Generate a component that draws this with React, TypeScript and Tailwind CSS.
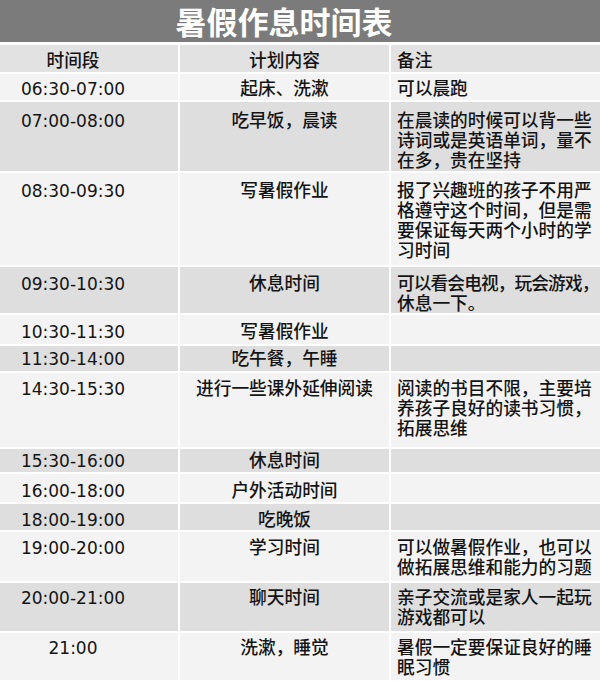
const rows = [
  { time: "06:30-07:00", plan: "起床、洗漱", notes: ["可以晨跑"], h: 26, pt: 3 },
  {
    time: "07:00-08:00",
    plan: "吃早饭，晨读",
    notes: ["在晨读的时候可以背一些", "诗词或是英语单词，量不", "在多，贵在坚持"],
    h: 69,
    pt: 7,
  },
  {
    time: "08:30-09:30",
    plan: "写暑假作业",
    notes: ["报了兴趣班的孩子不用严", "格遵守这个时间，但是需", "要保证每天两个小时的学", "习时间"],
    h: 92,
    pt: 6,
  },
  {
    time: "09:30-10:30",
    plan: "休息时间",
    notes: ["可以看会电视，玩会游戏，", "休息一下。"],
    h: 46,
    pt: 5,
  },
  { time: "10:30-11:30", plan: "写暑假作业", notes: [], h: 29, pt: 5 },
  { time: "11:30-14:00", plan: "吃午餐，午睡", notes: [], h: 25, pt: 1 },
  {
    time: "14:30-15:30",
    plan: "进行一些课外延伸阅读",
    notes: ["阅读的书目不限，主要培", "养孩子良好的读书习惯，", "拓展思维"],
    h: 74,
    pt: 4,
  },
  { time: "15:30-16:00", plan: "休息时间", notes: [], h: 23, pt: 0 },
  { time: "16:00-18:00", plan: "户外活动时间", notes: [], h: 28, pt: 5 },
  { time: "18:00-19:00", plan: "吃晚饭", notes: [], h: 26, pt: 4 },
  {
    time: "19:00-20:00",
    plan: "学习时间",
    notes: ["可以做暑假作业，也可以", "做拓展思维和能力的习题"],
    h: 49,
    pt: 4,
  },
  {
    time: "20:00-21:00",
    plan: "聊天时间",
    notes: ["亲子交流或是家人一起玩", "游戏都可以"],
    h: 48,
    pt: 3,
  },
  {
    time: "21:00",
    plan: "洗漱，睡觉",
    notes: ["暑假一定要保证良好的睡", "眠习惯"],
    h: 47,
    pt: 3,
  },
];

const timeFont = { fontFamily: '"DejaVu Sans", "Noto Sans", sans-serif' };

const App = () => {
  return (
    <div
      className="w-[600px] h-[681px] overflow-hidden bg-white text-[#141414]"
      style={{ fontFamily: '"Noto Sans CJK SC", "Noto Sans", sans-serif' }}
    >
      {/* title bar */}
      <div className="h-[42px] bg-[#7b7b7b] flex items-center justify-center pr-[32px]">
        <h1 className="text-[31px] leading-[42px] font-bold text-white">暑假作息时间表</h1>
      </div>

      <div className="mt-[3px] flex flex-col gap-[2px]">
        {/* header */}
        <div className="grid grid-cols-[178px_209px_209px] gap-x-[2px] h-[27px] text-[17.7px] leading-[20px] font-medium">
          <div className="bg-[#e2e2e2] flex items-center justify-center pr-[32px]">时间段</div>
          <div className="bg-[#e2e2e2] flex items-center justify-center">计划内容</div>
          <div className="bg-[#e2e2e2] flex items-center pl-[6px]">备注</div>
        </div>

        {rows.map((row, i) => {
          const bg = i % 2 === 0 ? "bg-[#f3f3f3]" : "bg-[#dedede]";
          return (
            <div
              key={row.time}
              className="grid grid-cols-[178px_209px_209px] gap-x-[2px] text-[17.7px] leading-[20px] font-medium"
              style={{ height: row.h }}
            >
              <div
                className={`${bg} text-center pr-[32px] text-[17px] font-normal`}
                style={{ ...timeFont, paddingTop: row.pt + 2 }}
              >
                {row.time}
              </div>
              <div className={`${bg} text-center whitespace-nowrap`} style={{ paddingTop: row.pt }}>
                {row.plan}
              </div>
              <div className={`${bg} pl-[6px] overflow-hidden`} style={{ paddingTop: row.pt }}>
                {row.notes.map((line) => (
                  <div
                    key={line}
                    className={line.length > 11 ? "whitespace-nowrap tracking-[-0.9px]" : "whitespace-nowrap"}
                  >
                    {line}
                  </div>
                ))}
              </div>
            </div>
          );
        })}
      </div>
    </div>
  );
};

export default App;
